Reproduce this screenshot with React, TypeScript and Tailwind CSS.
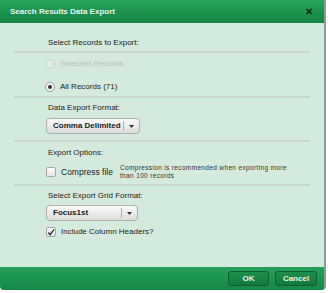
import React from 'react';

const Sep = () => <div className="mx-[14px] h-[2px] shrink-0 bg-[#c9d8ce]" />;

const Dropdown = ({ label, w }: { label: string; w: string }) => (
  <div className={`flex h-[16px] shrink-0 items-center rounded-[4px] border border-[#a9b3ac] bg-gradient-to-b from-[#fbfbfb] to-[#dcdcdc] ${w}`}>
    <span className="flex-1 whitespace-nowrap pl-[6px] text-[8px] font-bold leading-[10px] text-[#222]">{label}</span>
    <span className="h-[10px] w-px bg-[#b0b0b0]" />
    <span className="flex w-[15px] justify-center">
      <svg width="5" height="3" viewBox="0 0 5 3"><path d="M0 0h5L2.5 3z" fill="#333" /></svg>
    </span>
  </div>
);

const App = () => {
  return (
    <div className="h-[293px] w-[328px] bg-white" style={{ fontFamily: '"Liberation Sans", Arial, sans-serif' }}>
      <div className="flex h-[290px] w-[326px] flex-col overflow-hidden rounded-b-[4px] border-r-2 border-[#8f9a93]">
        <div className="flex h-[23px] shrink-0 items-center justify-between bg-gradient-to-b from-[#26a35c] to-[#148343] pl-[10px] pr-[11px]">
          <span className="whitespace-nowrap text-[8px] font-bold text-[#e6f4ea]">Search Results Data Export</span>
          <span className="text-[10px] font-bold leading-none text-[#0c2a17]">✕</span>
        </div>

        <div className="flex flex-1 flex-col whitespace-nowrap bg-[#d4eadc] text-[8px] leading-[10px] text-[#222]">
          <div className="h-[28px] shrink-0 pl-[48px] pt-[15px]">Select Records to Export:</div>
          <Sep />
          <div className="flex h-[43px] shrink-0 flex-col gap-[13px] pl-[45px] pt-[6px]">
            <div className="flex h-[10px] items-center gap-[5px] text-[#b8c2bb]">
              <span className="h-[10px] w-[10px] rounded-full border border-[#c7cec9] bg-[#e2ebe5]" />
              <span>Selected Records</span>
            </div>
            <div className="flex h-[10px] items-center gap-[5px]">
              <span className="flex h-[10px] w-[10px] items-center justify-center rounded-full border border-[#9aa39d] bg-[#f4f4f4]">
                <span className="h-[4px] w-[4px] rounded-full bg-[#333]" />
              </span>
              <span>All Records (71)</span>
            </div>
          </div>
          <Sep />
          <div className="flex h-[42px] shrink-0 flex-col gap-[5px] pl-[46px] pt-[5px]">
            <div className="pl-[2px]">Data Export Format:</div>
            <Dropdown label="Comma Delimited" w="w-[94px]" />
          </div>
          <Sep />
          <div className="flex h-[42px] shrink-0 flex-col gap-[9px] pl-[46px] pt-[6px]">
            <div className="pl-[2px]">Export Options:</div>
            <div className="flex h-[10px] items-center">
              <span className="h-[10px] w-[10px] rounded-[2px] border border-[#a0a8a3] bg-gradient-to-b from-white to-[#e3e3e3]" />
              <span className="ml-[5px] text-[8.5px]">Compress file</span>
              <span className="ml-[7px] text-[6.5px] leading-[8px] tracking-[0.35px] text-[#333]">
                Compression is recommended when exporting more<br />than 100 records
              </span>
            </div>
          </div>
          <Sep />
          <div className="flex flex-col pl-[46px] pt-[5px]">
            <div className="pl-[2px]">Select Export Grid Format:</div>
            <div className="mt-[4px]">
              <Dropdown label="Focus1st" w="w-[92px]" />
            </div>
            <div className="mt-[6px] flex h-[10px] items-center">
              <span className="flex h-[10px] w-[10px] items-center justify-center rounded-[2px] border border-[#a0a8a3] bg-gradient-to-b from-white to-[#e3e3e3]">
                <svg width="9" height="9" viewBox="0 0 9 9"><path d="M1.5 4.5l2 2.5L8 1" fill="none" stroke="#222" strokeWidth="1.4" /></svg>
              </span>
              <span className="ml-[5px]">Include Column Headers?</span>
            </div>
          </div>
        </div>

        <div className="flex h-[23px] shrink-0 items-center justify-end gap-[6px] bg-gradient-to-b from-[#24a059] to-[#16864a] pr-[7px]">
          <button className="h-[15px] w-[41px] rounded-[3px] border border-[#0e5f31] bg-gradient-to-b from-[#1c8f4c] to-[#137a3e] text-[8px] font-bold text-[#e8f5ec]">OK</button>
          <button className="h-[15px] w-[42px] rounded-[3px] border border-[#0e5f31] bg-gradient-to-b from-[#1c8f4c] to-[#137a3e] text-[8px] font-bold text-[#e8f5ec]">Cancel</button>
        </div>
      </div>
    </div>
  );
};

export default App;
